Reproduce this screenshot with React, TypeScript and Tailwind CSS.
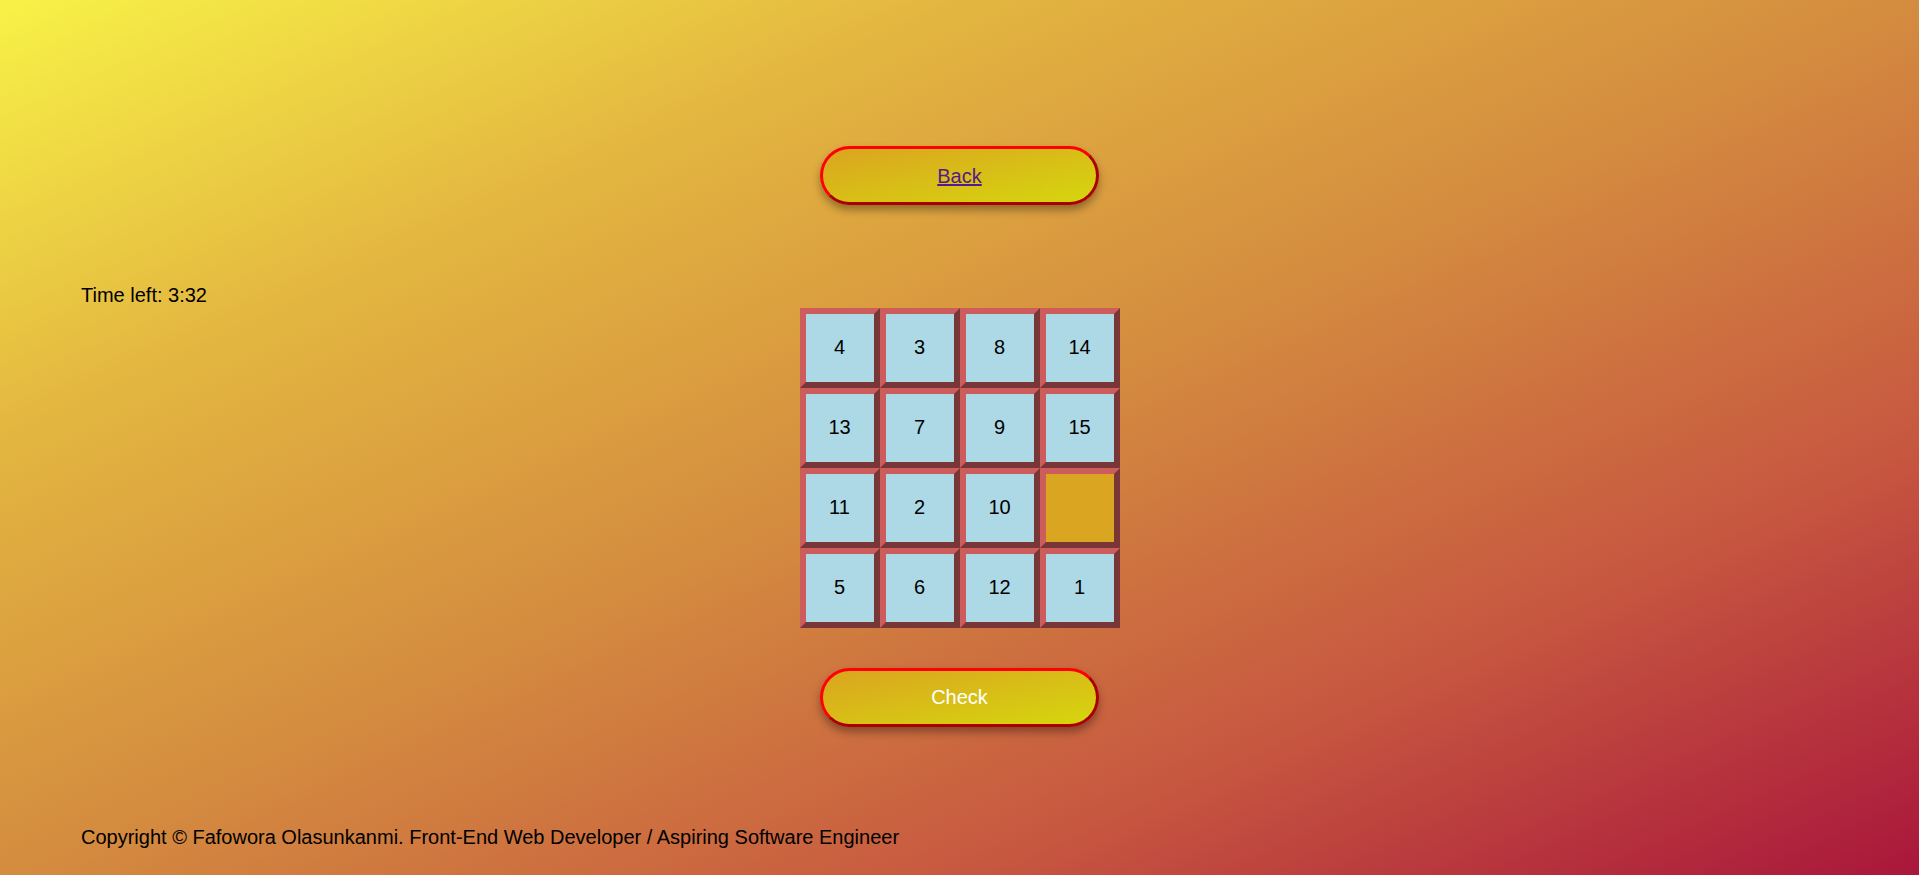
import React from "react";

const tiles: (number | null)[] = [4, 3, 8, 14, 13, 7, 9, 15, 11, 2, 10, null, 5, 6, 12, 1];

export default function App() {
  return (
    <div
      className="w-full h-[875px] overflow-hidden bg-[linear-gradient(to_bottom_right,#f8f247_0%,#e3b640_25%,#d48c3f_50%,#c75840_75%,#a9163b_100%)] text-black text-[20px]"
      style={{ fontFamily: '"Liberation Sans", Arial, sans-serif' }}
    >
      <div className="flex justify-center pt-[146px]">
        <button className="w-[279px] h-[59px] pt-[1px] rounded-full border-[3px] [border-style:outset] border-[#ff0000] bg-[linear-gradient(to_bottom_right,#daa520,#d6d60e)] shadow-[0_5px_8px_rgba(0,0,0,0.35)]">
          <a href="#" className="text-[#551a8b] underline">
            Back
          </a>
        </button>
      </div>

      <div className="grid grid-cols-[1fr_320px_1fr] mt-[75px]">
        <div className="pl-[81px]">Time left: 3:32</div>
        <div className="mt-[28px] grid grid-cols-4 w-[320px]">
          {tiles.map((n, i) => (
            <div
              key={i}
              className={`w-[80px] h-[80px] pb-[2px] border-[6px] [border-style:outset] border-[#cd5c5c] flex items-center justify-center text-[20px] leading-none ${
                n === null ? "bg-[#daa520]" : "bg-[#add8e6]"
              }`}
            >
              {n}
            </div>
          ))}
        </div>
        <div />
      </div>

      <div className="flex justify-center mt-[40px]">
        <button className="w-[279px] h-[59px] pb-[2px] rounded-full border-[3px] [border-style:outset] border-[#ff0000] bg-[linear-gradient(to_bottom_right,#daa520,#d6d60e)] shadow-[0_5px_8px_rgba(0,0,0,0.35)] text-white">
          Check
        </button>
      </div>

      <footer className="pl-[81px] mt-[95px]">
        Copyright © Fafowora Olasunkanmi. Front-End Web Developer / Aspiring Software Engineer
      </footer>
    </div>
  );
}
